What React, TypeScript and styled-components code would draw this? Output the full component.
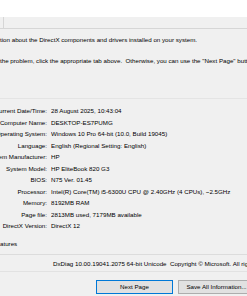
import React from 'react'
import styled, { createGlobalStyle } from 'styled-components'

const GlobalStyle = createGlobalStyle`
  html, body {
    margin: 0;
    padding: 0;
    background: #f0f0f0;
  }
  body {
    font-family: 'Liberation Sans', Arial, sans-serif;
  }
`

const Window = styled.div`
  width: 247px;
  height: 296px;
  overflow: hidden;
  display: flex;
  flex-direction: column;
  background: #f0f0f0;
  color: #000;
  font-size: 6.2px;
  line-height: 11.5px;
  white-space: nowrap;
`

const TopBand = styled.div`
  flex-shrink: 0;
  height: 17px;
  background: #ffffff;
`

const TabRow = styled.div`
  flex-shrink: 0;
  height: 11px;
  padding-left: 3px;
  display: flex;
`

const TabEdge = styled.div`
  flex: 1;
  border-left: 1px solid #d6d6d6;
`

const TabPage = styled.div`
  flex-shrink: 0;
  border-top: 1px solid #d6d6d6;
  border-bottom: 1px solid #dcdcdc;
  padding: 5px 0 4px;
  display: flex;
  flex-direction: column;
`

const Intro = styled.div<{ $gap?: number }>`
  margin-top: ${(p) => p.$gap ?? 0}px;
  overflow: hidden;
`

const Separator = styled.div`
  margin-top: 31px;
  height: 1px;
  background: #e4e4e4;
`

const InfoGrid = styled.div`
  margin-top: 6.5px;
  display: grid;
  grid-template-columns: 47px 1fr;
  column-gap: 4px;
`

const Label = styled.div`
  display: flex;
  justify-content: flex-end;
`

const Value = styled.div`
  overflow: hidden;
`

const CheckText = styled.div`
  margin-top: 6.5px;
`

const Footer = styled.div`
  flex-shrink: 0;
  padding: 3px 0 0 53px;
  border-bottom: 1px solid #e2e2e2;
  height: 17px;
  box-sizing: border-box;
`

const ButtonRow = styled.div`
  display: flex;
  gap: 5px;
  padding: 8px 0 0 96px;
`

const Button = styled.div<{ $focused?: boolean }>`
  flex-shrink: 0;
  width: 77px;
  height: 14px;
  box-sizing: border-box;
  background: #e1e1e1;
  border: 1px solid ${(p) => (p.$focused ? '#0078d7' : '#adadad')};
  display: flex;
  align-items: center;
  justify-content: center;
  line-height: 12px;
`

const rows: [string, string][] = [
  ['Current Date/Time:', '28 August 2025, 10:43:04'],
  ['Computer Name:', 'DESKTOP-ES7PUMG'],
  ['Operating System:', 'Windows 10 Pro 64-bit (10.0, Build 19045)'],
  ['Language:', 'English (Regional Setting: English)'],
  ['System Manufacturer:', 'HP'],
  ['System Model:', 'HP EliteBook 820 G3'],
  ['BIOS:', 'N75 Ver. 01.45'],
  ['Processor:', 'Intel(R) Core(TM) i5-6300U CPU @ 2.40GHz (4 CPUs), ~2.5GHz'],
  ['Memory:', '8192MB RAM'],
  ['Page file:', '2813MB used, 7179MB available'],
  ['DirectX Version:', 'DirectX 12'],
]

const App = () => {
  return (
    <React.Fragment>
      <GlobalStyle />
      <Window>
        <TopBand />
        <TabRow>
          <TabEdge />
        </TabRow>
        <TabPage>
          <Intro>tion about the DirectX components and drivers installed on your system.</Intro>
          <Intro $gap={9.5}>
            the problem, click the appropriate tab above.&nbsp; Otherwise, you can use the "Next Page" button below to visit each page in sequence.
          </Intro>
          <Separator />
          <InfoGrid>
            {rows.map(([label, value]) => (
              <React.Fragment key={label}>
                <Label>{label}</Label>
                <Value>{value}</Value>
              </React.Fragment>
            ))}
          </InfoGrid>
          <CheckText>atures</CheckText>
        </TabPage>
        <Footer>DxDiag 10.00.19041.2075 64-bit Unicode&nbsp; Copyright © Microsoft. All rights reserved.</Footer>
        <ButtonRow>
          <Button $focused>Next Page</Button>
          <Button>Save All Information...</Button>
        </ButtonRow>
      </Window>
    </React.Fragment>
  )
}

export default App
